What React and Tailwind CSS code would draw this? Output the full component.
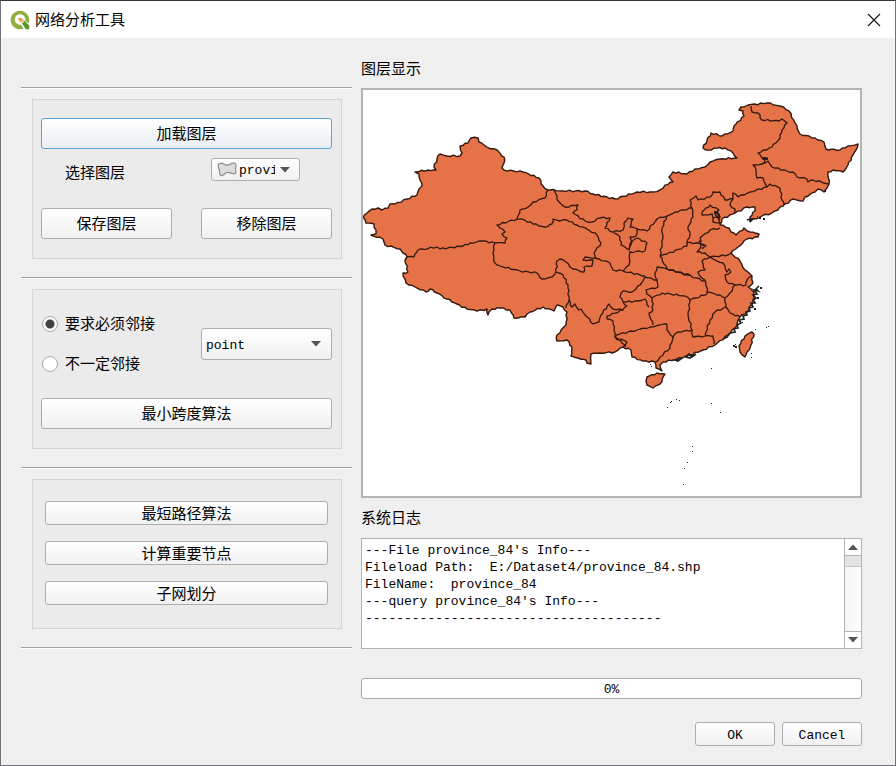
import React from 'react';

const OUTLINE =
  '363,217 367,213 372,209 378,208 382,210 388,208 390,204 395,204 407,199 417,195 419,189 422,186 420,180 419,174 415,172 428,170 436,170 434,167 437,159 440,154 447,156 460,156 462,153 460,146 468,143 471,138 478,138 479,142 487,147 497,150 500,153 504,157 504,163 502,168 504,170 523,172 539,178 543,186 548,190 550,190 563,191 585,191 593,194 615,199 637,192 653,192 660,190 665,185 673,182 669,177 673,172 687,174 695,169 705,167 710,162 720,159 737,158 733,153 725,148 717,148 708,150 703,148 711,133 722,136 733,131 734,126 744,116 743,111 739,110 741,107 748,105 767,103 780,106 789,111 795,123 800,134 815,138 824,142 826,149 840,150 848,146 858,144 856,150 853,155 848,165 843,172 833,170 828,172 829,184 827,188 824,192 818,189 815,192 805,197 803,201 793,199 783,206 772,213 762,216 750,221 750,217 755,211 755,207 747,207 735,213 722,219 720,225 729,228 731,232 736,235 744,228 750,232 759,234 758,237 747,239 738,247 731,253 740,261 745,270 752,276 753,283 748,287 754,292 753,302 747,312 740,317 735,328 728,335 715,345 703,350 690,355 677,359 663,362 660,365 662,371 656,368 655,362 643,361 632,357 631,350 623,347 615,352 600,353 591,354 591,364 587,363 586,360 578,358 571,356 572,347 567,340 557,341 557,335 566,325 567,312 563,307 557,305 554,311 543,307 530,312 525,317 514,318 510,310 500,308 492,309 488,315 487,309 477,311 467,309 457,304 447,299 437,293 430,289 426,292 415,287 406,283 403,273 408,272 405,260 407,257 400,249 385,245 383,239 371,235 376,234 374,224 366,223 363,217';

const HAINAN = '647,377 657,373 665,374 660,384 653,388 647,385 646,381 647,377';
const TAIWAN = '752,332 754,334 750,348 747,352 745,357 740,352 739,346 745,336 752,332';

const BORDERS = [
  '407,257 414,257 418,250 437,247 440,249 463,246 470,243 483,241 495,243',
  '495,243 505,243 507,238 502,234 505,232 500,228 497,225 517,219',
  '517,219 520,210 528,207 533,202 545,198 548,190',
  '517,219 522,219 533,224 545,227 552,224 553,219 560,221 567,220 577,225 587,229 597,235 601,243 594,253 595,258 585,257 583,260 593,260 592,266 584,267 584,272 573,269 566,262 560,259 557,261 556,272 552,277 542,279 537,273 520,271 500,266 494,262 493,253 495,243',
  '556,272 563,275 568,285 569,300 566,308',
  '569,300 572,307 575,304 579,310 581,309 587,317 593,324 599,322 601,315 609,304 613,309 623,310 627,306 623,302',
  '623,310 607,316 607,319 613,321 614,330 615,337 625,345 623,347',
  '615,337 620,334 637,330 650,327 660,325 667,324',
  '615,337 627,342 625,347',
  '623,302 638,301 645,299 649,307',
  '623,302 620,297 623,291 632,292 640,285 645,277 657,280 658,287 646,290 647,294 652,298 653,310 649,313 653,325',
  '595,258 599,259 610,263 613,270 623,271 645,276',
  '623,271 629,265 630,252 645,251 647,243 637,238 631,242 629,250',
  '613,232 620,237 621,245 629,250 632,242 630,237 636,236 637,229 630,227 633,219 628,218 624,223 623,230 613,232',
  '554,190 559,202 565,207 578,205 577,210 573,213 585,221 592,222 600,218 610,218 605,228 613,232',
  '637,229 647,231 657,219 667,216 675,212 692,208',
  '667,216 662,228 663,238 660,256 667,254 687,246 687,243',
  '692,208 693,217 688,227 690,235 687,243 698,243 701,240',
  '692,208 690,200 696,196 698,200 710,197 713,192 720,192 725,200 733,199 733,193 738,197 750,192 767,187',
  '733,199 730,205 735,209 735,213',
  '767,187 770,184 780,188 782,200 784,205',
  '767,187 763,178 757,178 756,170 753,165 762,164',
  '762,164 768,161 772,167 787,171 793,172 797,177 805,178 808,182 813,180 829,184',
  '762,164 767,158 763,159 758,153 772,147 780,138 782,130 787,123 782,119 779,121 762,120 758,113 752,112 751,106',
  '702,212 710,205 719,210 716,212 720,217 713,218 712,214 702,215 702,212',
  '713,218 713,222 720,223 718,212 715,214 720,220',
  '720,228 710,230 700,238 701,247 697,252 705,253 710,257 728,255 731,253',
  '698,243 706,246 702,249',
  '710,257 702,261 705,270 698,272 702,278 706,282 707,292 720,295 725,298 730,293 735,285 727,282 725,275 731,272 729,269 727,272 723,263 715,260 710,257',
  '660,256 667,269 690,275',
  '735,285 746,285 747,280 752,276',
  '725,298 726,307 730,313 740,317',
  '726,307 715,312 710,320 705,335',
  '705,336 693,337 692,330 688,315 690,302 690,300',
  '705,336 713,336 714,344',
  '692,330 678,332 673,337 667,330 667,324',
  '673,337 670,348 660,357 656,362',
  '652,298 662,293 685,296 690,300 707,294 707,292',
  '657,280 655,273 657,267 667,269 687,275 705,281',
];

const ARCHIPELAGO = [
  '759,286 756,289 758,291 754,290 757,294 753,295 756,298 753,300 755,303 751,303 753,307 749,308 750,311 746,312 747,315 743,316 744,319 739,320 741,323 737,325 738,328 734,329 735,332 730,333 727,337 723,339',
  '696,354 692,357 689,354 686,357 690,358 693,355 687,355',
  '682,358 678,361 675,360 680,359',
  '747,220 751,219 750,222 754,218',
];

const ISLETS = [
  [760, 287, 2], [757, 297, 2], [754, 308, 2], [742, 322, 1], [763, 218, 2], [759, 217, 2], [757, 216, 1],
  [714, 211, 3], [718, 214, 2], [763, 157, 3], [766, 158, 2], [824, 190, 2], [702, 244, 2], [733, 345, 2],
  [735, 346, 2], [735, 344, 1], [651, 366, 1], [650, 364, 1], [755, 329, 1], [768, 326, 1], [766, 327, 1],
  [751, 353, 1], [751, 357, 1], [711, 368, 1], [667, 407, 1], [670, 402, 1], [671, 401, 1], [676, 399, 1],
  [679, 400, 1], [711, 403, 1], [720, 412, 1], [692, 446, 1], [692, 451, 1], [687, 462, 1], [684, 468, 1],
  [683, 484, 1],
];

// Splits each segment and nudges the joints so the lines read as surveyed borders.
function survey(text) {
  const points = text.split(' ').map((pair) => pair.split(',').map(Number));
  const out = [points[0]];
  for (let i = 1; i < points.length; i += 1) {
    const [ax, ay] = points[i - 1];
    const [bx, by] = points[i];
    const length = Math.hypot(bx - ax, by - ay);
    const steps = Math.max(1, Math.round(length / 3));
    for (let s = 1; s < steps; s += 1) {
      const t = s / steps;
      const push = Math.sin((ax + by + s * 7) * 12.9) * 0.8;
      out.push([ax + (bx - ax) * t - ((by - ay) / length) * push, ay + (by - ay) * t + ((bx - ax) / length) * push]);
    }
    out.push([bx, by]);
  }
  return out.map(([x, y]) => `${x.toFixed(1)},${y.toFixed(1)}`).join(' ');
}

function ChinaMap() {
  return (
    <svg viewBox="363 90 497 406" className="block h-full w-full" role="img" aria-label="province_84">
      <g fill="#e67248" stroke="#35190f" strokeWidth="1.4" strokeLinejoin="round">
        <polygon points={survey(OUTLINE)} />
        <polygon points={survey(HAINAN)} />
        <polygon points={survey(TAIWAN)} />
      </g>
      <g fill="none" stroke="#35190f" strokeWidth="1.3" strokeLinejoin="round">
        {BORDERS.map((line) => (
          <polyline key={line} points={survey(line)} />
        ))}
      </g>
      <g fill="none" stroke="#232323" strokeWidth="1.7">
        {ARCHIPELAGO.map((line) => (
          <polyline key={line} points={line} />
        ))}
      </g>
      <g fill="#232323">
        {ISLETS.map(([x, y, size]) => (
          <rect key={`${x}-${y}`} x={x} y={y} width={size} height={size} />
        ))}
      </g>
    </svg>
  );
}

function QgisLogo() {
  return (
    <svg viewBox="0 0 20 20" className="h-5 w-5" aria-hidden="true">
      <path
        d="M10 .8a9.2 9.2 0 1 0 3.6 17.600l-2.600-3.700A5.300 5.300 0 1 1 15.200 10.800l3.300 2.800A9.200 9.200 0 0 0 10 .8z"
        fill="#8fae3f"
      />
      <path d="M11.500 12.500l2.500-2.300 5.200 5.300v3.700h-3.500z" fill="#589632" />
      <path d="M8.300 8h3l2.900 2.900-2.200 2.300-3.700-3.500z" fill="#ee9a4c" />
      <path d="M11 12.200l1.900-2 1.300 1.200-2 2z" fill="#f5d8b4" />
    </svg>
  );
}

function PolygonIcon() {
  return (
    <svg viewBox="0 0 20 16" className="h-4 w-5 shrink-0" aria-hidden="true">
      <path
        d="M1.500 2.500C3 .8 5 .8 7 2C9 3.500 11 3.500 13 2.300C15 1 18 .8 18.700 2C19.500 4 18.300 6 18.600 8C19 10 19.500 11.500 17.500 11.800C15 12 13 10 10 10.500C7.500 11 6.500 14 4 13.700C1.800 13.300 3 10.500 2.500 8.500C2 6.500 .5 4.500 1.500 2.500z"
        fill="#dcdcdc"
        stroke="#8c8c8c"
        strokeWidth="1.2"
      />
    </svg>
  );
}

function Triangle({ up = false }) {
  return (
    <svg viewBox="0 0 10 6" className="pointer-events-none h-[6px] w-[10px] shrink-0" aria-hidden="true">
      <path d={up ? 'M0 6L5 0.500L10 6z' : 'M0 0L5 5.500L10 0z'} fill="#555" />
    </svg>
  );
}

const SURFACE = 'rounded-[3px] border bg-gradient-to-b from-white';

function Button({ children, className = '', active = false }) {
  return (
    <button
      type="button"
      className={`${SURFACE} flex items-center justify-center ${
        active ? 'border-[#5ba3d9] to-[#e9eef3]' : 'border-[#adadad] to-[#f0f0f0]'
      } ${className}`}
    >
      {children}
    </button>
  );
}

function Rule() {
  return <hr className="h-[2px] border-t border-b border-t-[#a0a0a0] border-b-white" />;
}

function Group({ children, className }) {
  return (
    <section className={`mt-[10px] mr-[10px] mb-[18px] ml-[11px] border border-[#d5d5d5] bg-[#ebebeb] ${className}`}>
      {children}
    </section>
  );
}

function Radio({ label, checked = false }) {
  return (
    <label className="flex h-5 items-center gap-[7px]">
      <input
        type="radio"
        name="adjacency"
        defaultChecked={checked}
        className="h-4 w-4 appearance-none rounded-full border border-[#a8a8a8] bg-white checked:bg-[radial-gradient(circle,#404040_0_4px,transparent_5px)]"
      />
      <span className="pb-[2px]">{label}</span>
    </label>
  );
}

const LOG = [
  "---File province_84's Info---",
  'Fileload Path:  E:/Dataset4/province_84.shp',
  'FileName:  province_84',
  "---query province_84's Info---",
  '--------------------------------------',
].join('\n');

const MONO = "font-['Liberation_Mono','Noto_Sans_CJK_SC',monospace] text-[13px]";

export default function App() {
  return (
    <main className="border border-[#6e7175] border-t-[#33333b] bg-[#efefef] font-['Noto_Sans_CJK_SC',sans-serif] text-[15px] leading-5 font-normal text-black">
      <header className="flex h-[37px] items-center bg-white pr-[14px] pl-[9px]">
        <QgisLogo />
        <h1 className="ml-[5px] grow pb-px">网络分析工具</h1>
        <button type="button" aria-label="Close">
          <svg viewBox="0 0 14 14" className="h-[14px] w-[14px]" aria-hidden="true">
            <path d="M1 1l12 12M13 1L1 13" stroke="#111" strokeWidth="1.1" />
          </svg>
        </button>
      </header>

      <div className="grid grid-cols-[331fr_501fr] gap-[9px] pt-px pr-[33px] pl-5">
        <div className="pt-12">
          <Rule />
          <Group className="pt-[18px] pr-[9px] pb-[19px] pl-2">
            <Button active className="h-[31px] w-full pb-[2px]">加载图层</Button>
            <div className="mt-[9px] flex h-[30px] justify-between pr-8 pl-6">
              <label htmlFor="layer" className="self-center pb-[2px]">选择图层</label>
              <div className={`${SURFACE} flex h-[23px] w-[89px] items-center border-[#adadad] to-[#f0f0f0] pl-[5px]`}>
                <PolygonIcon />
                <select id="layer" className={`ml-[2px] w-9 appearance-none overflow-hidden pt-[2px] ${MONO}`}>
                  <option>province_84</option>
                </select>
                <span className="ml-[5px]"><Triangle /></span>
              </div>
            </div>
            <div className="mt-5 grid grid-cols-2 gap-[29px]">
              <Button className="h-[31px] pb-[2px]">保存图层</Button>
              <Button className="h-[31px] pb-[2px]">移除图层</Button>
            </div>
          </Group>

          <Rule />
          <Group className="pt-6 pr-[9px] pb-[19px] pl-2">
            <div className="grid grid-cols-2 items-center gap-[29px]">
              <fieldset className="flex flex-col gap-5 pl-px">
                <Radio label="要求必须邻接" checked />
                <Radio label="不一定邻接" />
              </fieldset>
              <div className={`${SURFACE} flex h-8 items-center border-[#adadad] to-[#f0f0f0] pr-[10px] pl-1`}>
                <select aria-label="要求必须邻接" className={`min-w-0 grow appearance-none pt-[3px] ${MONO}`}>
                  <option>point</option>
                </select>
                <Triangle />
              </div>
            </div>
            <Button className="mt-6 h-[31px] w-full pb-[2px]">最小跨度算法</Button>
          </Group>

          <Rule />
          <Group className="flex flex-col gap-4 pt-[21px] pr-[13px] pb-[23px] pl-3">
            <Button className="h-6">最短路径算法</Button>
            <Button className="h-6">计算重要节点</Button>
            <Button className="h-6">子网划分</Button>
          </Group>
          <Rule />
        </div>

        <div className="pt-[19px] pb-[19px]">
          <h2>图层显示</h2>
          <div className="mt-[10px] h-[410px] border-2 border-[#b4b4b4] bg-white">
            <ChinaMap />
          </div>

          <label htmlFor="log" className="mt-[9px] block">系统日志</label>
          <div className="mt-[11px] flex h-[111px] border border-[#b4b4b4] bg-white">
            <textarea
              id="log"
              readOnly
              defaultValue={LOG}
              className={`min-w-0 grow resize-none overflow-hidden px-[3px] pt-[3px] leading-[17px] outline-none ${MONO}`}
            />
            <div className="flex w-[17px] flex-col border-l border-[#b4b4b4]">
              <button type="button" aria-label="Scroll up" className="flex h-4 items-center justify-center">
                <Triangle up />
              </button>
              <div className="grow border-y border-[#b4b4b4] bg-gradient-to-r from-[#f4f4f4] to-white">
                <div className="h-[11px] border-b border-[#c4c4c4] bg-[#e3e3e3]" />
              </div>
              <button type="button" aria-label="Scroll down" className="flex h-4 items-center justify-center">
                <Triangle />
              </button>
            </div>
          </div>

          <div
            role="progressbar"
            aria-label="进度"
            aria-valuenow={0}
            className={`mt-[29px] flex h-[21px] items-center justify-center rounded-[3px] border border-[#a8a8a8] bg-white pt-[2px] ${MONO}`}
          >
            0%
          </div>
          <div className={`mt-[23px] flex justify-end gap-[7px] ${MONO}`}>
            <Button className="h-6 w-20 pt-[3px]">OK</Button>
            <Button className="h-6 w-20 pt-[3px]">Cancel</Button>
          </div>
        </div>
      </div>
    </main>
  );
}
